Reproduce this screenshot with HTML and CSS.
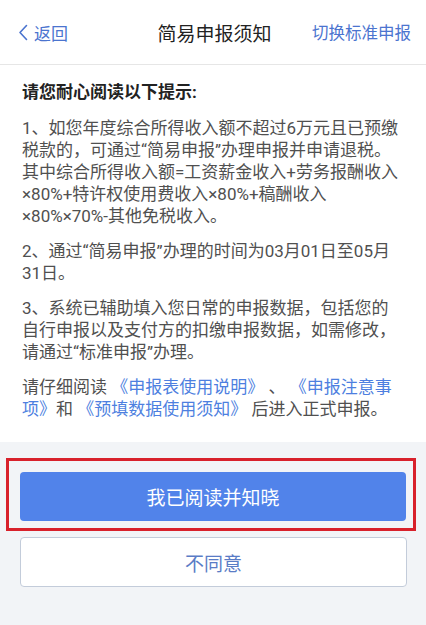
FILE: index.html
```html
<!DOCTYPE html>
<html lang="zh-CN">
<head>
    <meta charset="UTF-8">
    <meta name="viewport" content="width=device-width, initial-scale=1.0">
    <title>简易申报须知</title>
    <link rel="stylesheet" href="styles.css">
</head>
<body>
    <header class="nav">
        <a class="nav-back" href="#">
            <svg width="10" height="17" viewBox="0 0 10 17"><path d="M8.5 1.5 L2 8.5 L8.5 15.5" fill="none" stroke="currentColor" stroke-width="1.6" stroke-linecap="round" stroke-linejoin="round"/></svg>
            <span>返回</span>
        </a>
        <h1 class="nav-title">简易申报须知</h1>
        <a class="nav-switch" href="#">切换标准申报</a>
    </header>

    <section class="notice">
        <h2>请您耐心阅读以下提示:</h2>
        <p>1、如您年度综合所得收入额不超过6万元且已预缴<br>税款的，可通过“简易申报”办理申报并申请退税。<br>其中综合所得收入额=工资薪金收入+劳务报酬收入<br>×80%+特许权使用费收入×80%+稿酬收入<br>×80%×70%-其他免税收入。</p>
        <p>2、通过“简易申报”办理的时间为03月01日至05月<br>31日。</p>
        <p>3、系统已辅助填入您日常的申报数据，包括您的<br>自行申报以及支付方的扣缴申报数据，如需修改，<br>请通过“标准申报”办理。</p>
        <p>请仔细阅读 <a href="#">《申报表使用说明》</a> 、 <a href="#">《申报注意事<br>项》</a>和 <a href="#">《预填数据使用须知》</a> 后进入正式申报。</p>
    </section>

    <div class="actions">
        <div class="highlight">
            <button class="btn btn-primary">我已阅读并知晓</button>
        </div>
        <button class="btn btn-plain">不同意</button>
    </div>
</body>
</html>
```

FILE: styles.css
```css
body {
    margin: 0;
    padding: 0;
    background-color: #f2f4f7;
    font-family: Roboto, "Noto Sans CJK SC", sans-serif;
    color: #505050;
}
a {
    text-decoration: none;
}
.nav {
    height: 64px;
    display: grid;
    grid-template-columns: 1fr auto 1fr;
    align-items: center;
    padding: 0 15px 0 18px;
    background: #fff;
    border-bottom: 1px solid #e6e6e6;
}
.nav-back {
    display: flex;
    align-items: center;
    gap: 6px;
    color: #4b74cf;
    font-size: 17px;
}
.nav-title {
    margin: 0;
    font-size: 19px;
    font-weight: normal;
    color: #222;
}
.nav-switch {
    justify-self: end;
    color: #4b74cf;
    font-size: 16.5px;
}
.notice {
    background: #fff;
    padding: 16px 12px 22px 22px;
}
.notice h2 {
    margin: 0 0 14px;
    font-size: 17px;
    line-height: 22px;
    font-weight: bold;
    color: #222;
}
.notice p {
    margin: 0 0 13px;
    font-size: 17px;
    line-height: 22px;
    white-space: nowrap;
}
.notice p:last-child {
    margin-bottom: 0;
}
.notice a {
    color: #4d7fe0;
}
.actions {
    padding: 16px 10px 0 6px;
}
.highlight {
    border: 3px solid #d8212b;
    padding: 11px 7px 7px 11px;
}
.btn {
    display: block;
    width: 100%;
    height: 49px;
    border-radius: 4px;
    font-family: inherit;
    font-size: 19px;
    cursor: pointer;
}
.btn-primary {
    background: #5183ea;
    color: #fff;
    border: none;
}
.btn-plain {
    width: 387px;
    height: 50px;
    margin: 6px 0 0 14px;
    background: #fff;
    color: #5a7cc6;
    border: 1px solid #c3ccda;
}
```
